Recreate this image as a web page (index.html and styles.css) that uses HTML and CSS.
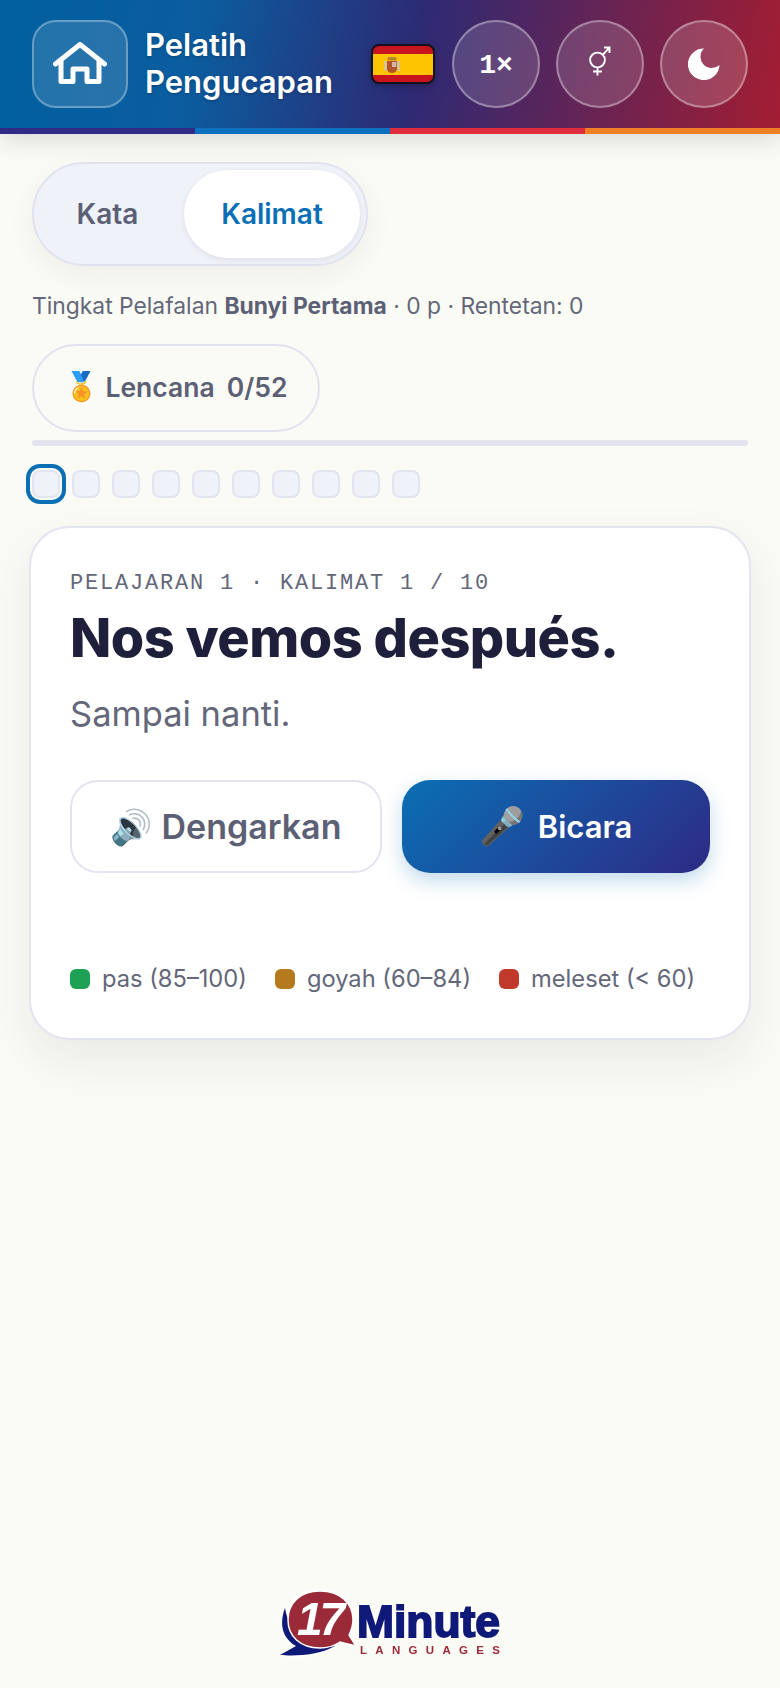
FILE: index.html
```html
<!DOCTYPE html>
<html lang="id">
<head>
<meta charset="utf-8">
<title>Pelatih Pengucapan</title>
<link rel="stylesheet" href="styles.css">
</head>
<body>
<div class="page">
  <header class="header">
    <div class="topbar">
      <button class="home" aria-label="Beranda">
        <svg viewBox="0 0 54 42" width="54" height="42" fill="none" stroke="#fff" stroke-width="5" stroke-linecap="round" stroke-linejoin="round">
          <path d="M2.5 22 L27 2.5 L51.5 22"/>
          <path d="M8 18 V39.5 H20 V27 H34 V39.5 H46 V18"/>
        </svg>
      </button>
      <h1 class="title">Pelatih<br>Pengucapan</h1>
      <svg class="flag" viewBox="0 0 64 40" width="64" height="40">
        <rect x="1" y="1" width="62" height="38" rx="7" fill="#ffc400"/>
        <path d="M1 10 V8 a7 7 0 0 1 7-7 H56 a7 7 0 0 1 7 7 V10 Z" fill="#c8141e"/>
        <path d="M1 31 V32 a7 7 0 0 0 7 7 H56 a7 7 0 0 0 7-7 V31 Z" fill="#c8141e"/>
        <rect x="13" y="17" width="2.6" height="10" fill="#d3c3a0"/>
        <rect x="26.4" y="17" width="2.6" height="10" fill="#d3c3a0"/>
        <path d="M16 17 H26 V25 a5 4 0 0 1-10 0 Z" fill="#b5532a"/>
        <rect x="21" y="18" width="4.4" height="5" fill="#cdb7b0"/>
        <rect x="16.5" y="13" width="9" height="3.6" rx="1.6" fill="#b8862a"/>
        <rect x="1" y="1" width="62" height="38" rx="7" fill="none" stroke="#14101c" stroke-width="2"/>
      </svg>
      <button class="round speed">1×</button>
      <button class="round gender">
        <svg viewBox="0 0 22 30" width="22" height="30" fill="none" stroke="#fff" stroke-width="1.9">
          <circle cx="8.5" cy="14" r="7.4"/>
          <path d="M8.5 21.5 V29.5 M4 25.5 H13 M13.7 8.8 L20.5 1.5 M15 1.5 H20.5 V7"/>
        </svg>
      </button>
      <button class="round moon">
        <svg viewBox="0 0 32 32" width="32" height="32"><path d="M16 0.5 A15.8 15.8 0 1 0 31.5 17 A11 11 0 0 1 16 0.5 Z" fill="#fff"/></svg>
      </button>
    </div>
    <div class="stripe">
      <span class="stripe-a"></span><span class="stripe-b"></span><span class="stripe-c"></span><span class="stripe-d"></span>
    </div>
  </header>

  <main class="main">
    <div class="toggle">
      <span class="tab">Kata</span>
      <span class="tab active">Kalimat</span>
    </div>
    <p class="status">Tingkat Pelafalan <b>Bunyi Pertama</b> · 0 p · Rentetan: 0</p>
    <button class="badge"><span class="emoji badge-emoji">🏅</span><span>Lencana</span><span class="count">0/52</span></button>
    <div class="progress"></div>
    <div class="dots">
      <span class="dot current"></span><span class="dot"></span><span class="dot"></span><span class="dot"></span><span class="dot"></span><span class="dot"></span><span class="dot"></span><span class="dot"></span><span class="dot"></span><span class="dot"></span>
    </div>

    <section class="card">
      <div class="kicker">PELAJARAN 1 · KALIMAT 1 / 10</div>
      <h2 class="phrase">Nos vemos después.</h2>
      <p class="translation">Sampai nanti.</p>
      <div class="actions">
        <button class="btn listen"><span class="emoji">🔊</span> Dengarkan</button>
        <button class="btn speak"><span class="emoji mic">🎤</span><span>Bicara</span></button>
      </div>
      <div class="legend">
        <span class="key"><i class="swatch green"></i>pas (85–100)</span>
        <span class="key"><i class="swatch amber"></i>goyah (60–84)</span>
        <span class="key"><i class="swatch red"></i>meleset (&lt; 60)</span>
      </div>
    </section>
  </main>

  <footer class="footer">
    <svg class="logo" viewBox="0 0 224 70" width="224" height="70">
      <path d="M7 20 C1 36 4 50 18 58 L2 67 C16 68 40 68 57 58 C36 62 12 50 7 20 Z" fill="#0f1a78"/>
      <path d="M42 3 C62 3 75 15 75 32 C75 38 73 43 71 47 L78 58 L62 54 C56 58 50 60 42 60 C22 60 10 48 10 32 C10 15 22 3 42 3 Z" fill="#9a2a38" stroke="#fff" stroke-width="1.5"/>
      <text x="19" y="47" class="logo-num">17</text>
      <text x="79" y="49" class="logo-word" textLength="143" lengthAdjust="spacingAndGlyphs">Minute</text>
      <text x="82" y="66" class="logo-sub" textLength="140">LANGUAGES</text>
    </svg>
  </footer>
</div>
</body>
</html>
```
FILE: styles.css
```css
* { box-sizing: border-box; }
html, body { margin: 0; padding: 0; }
body {
  background: #fbfbf5;
  font-family: Inter, "Noto Sans", sans-serif;
  color: #1e1f3b;
}
button { font-family: inherit; cursor: pointer; }
.page { min-height: 1688px; display: flex; flex-direction: column; }

.header { box-shadow: 0 4px 24px rgba(30, 31, 59, .18); }
.topbar {
  height: 128px;
  padding: 0 32px;
  display: flex;
  align-items: center;
  background: linear-gradient(100deg, #01609f 0%, #0b5d9f 25%, #2d2a74 53%, #a31d32 100%);
}
.home {
  width: 96px;
  height: 88px;
  flex: none;
  display: flex;
  align-items: center;
  justify-content: center;
  border-radius: 24px;
  background: rgba(255, 255, 255, .13);
  border: 2px solid rgba(255, 255, 255, .3);
  padding: 0 0 3px;
}
.title {
  margin: 0 0 2px 17px;
  flex: 1;
  font-size: 31px;
  line-height: 37px;
  font-weight: 600;
  color: #fff;
  text-shadow: 0 1px 3px rgba(0, 0, 0, .25);
}
.flag { flex: none; margin-right: 17px; filter: drop-shadow(0 2px 3px rgba(0,0,0,.25)); }
.round {
  width: 88px;
  height: 88px;
  flex: none;
  display: flex;
  align-items: center;
  justify-content: center;
  margin-left: 16px;
  padding: 0;
  border-radius: 50%;
  background: rgba(255, 255, 255, .14);
  border: 2px solid rgba(255, 255, 255, .35);
  color: #fff;
}
.speed {
  margin-left: 0;
  padding-top: 3px;
  font-family: "Liberation Mono", monospace;
  font-size: 28px;
  font-weight: 700;
}
.gender { padding-bottom: 6px; }
.moon { background: rgba(255, 255, 255, .16); }
.stripe { height: 6px; display: flex; }
.stripe span { flex: 1; }
.stripe-a { background: #2e2a85; }
.stripe-b { background: #0a6fbd; }
.stripe-c { background: #e02b3d; }
.stripe-d { background: #f07f24; }

.main { padding: 28px 32px 0; }
.toggle {
  width: 336px;
  height: 104px;
  padding: 6px;
  display: flex;
  border-radius: 52px;
  background: #f0f2f9;
  border: 2px solid #e0e2ef;
  box-shadow: 0 10px 28px rgba(30, 31, 59, .06);
}
.tab {
  display: flex;
  align-items: center;
  justify-content: center;
  font-size: 28px;
  font-weight: 600;
  color: #5c6075;
  width: 144px;
  padding-right: 9px;
}
.tab.active {
  width: 176px;
  padding-right: 0;
  border-radius: 44px;
  background: #fff;
  color: #0a6fb5;
  box-shadow: 0 2px 6px rgba(30, 31, 59, .08);
}
.status {
  margin: 24px 0 0;
  font-size: 22.85px;
  line-height: 32px;
  color: #636779;
}
.status b { font-weight: 700; color: #5c6075; }
.badge {
  display: flex;
  align-items: center;
  justify-content: center;
  gap: 6px;
  width: 288px;
  height: 88px;
  margin-top: 22px;
  padding: 0 0 3px;
  border-radius: 44px;
  background: transparent;
  border: 2px solid #e0e2ef;
  font-size: 26.5px;
  font-weight: 600;
  color: #5c6075;
}
.count { margin-left: 6px; }
.emoji { font-family: "Noto Color Emoji", Inter, sans-serif; }
.badge-emoji { font-size: 28px; }
.progress { height: 6px; margin-top: 8px; border-radius: 3px; background: #e2e3ee; }
.dots { display: flex; gap: 12px; margin-top: 24px; }
.dot {
  width: 28px;
  height: 28px;
  border-radius: 8px;
  background: #f0f2f9;
  border: 2px solid #e2e4f0;
}
.dot.current { outline: 4px solid #0a6fb5; outline-offset: 2px; }

.card {
  margin: 28px -3px 0;
  height: 514px;
  padding: 41px 39px 0;
  background: #fff;
  border: 2px solid #e2e4f0;
  border-radius: 40px;
  box-shadow: 0 20px 48px rgba(30, 31, 59, .08);
}
.kicker {
  font-family: "Liberation Mono", monospace;
  font-size: 22px;
  line-height: 30px;
  letter-spacing: 1.8px;
  color: #636779;
}
.phrase {
  margin: 6px 0 0;
  font-size: 54px;
  line-height: 66px;
  font-weight: 800;
  letter-spacing: -.5px;
  color: #1e1f3b;
}
.translation {
  margin: 21px 0 0;
  font-size: 34.5px;
  line-height: 44px;
  color: #636779;
}
.actions { display: flex; gap: 20px; margin-top: 44px; }
.btn {
  flex: 1;
  height: 93px;
  padding: 0;
  border-radius: 28px;
  font-size: 34px;
  font-weight: 600;
}
.listen { background: #fff; border: 2px solid #e2e4f0; color: #5c6075; }
.speak {
  display: flex;
  align-items: center;
  justify-content: center;
  gap: 12px;
  border: 0;
  font-size: 31px;
  color: #fff;
  background: linear-gradient(135deg, #0a6fb5, #2e2a85);
  box-shadow: 0 8px 20px rgba(10, 111, 181, .25);
}
.mic { font-size: 37px; }
.legend { display: flex; gap: 28px; margin-top: 90px; }
.key {
  display: flex;
  align-items: center;
  gap: 12px;
  font-size: 23.7px;
  line-height: 32px;
  color: #636779;
  white-space: nowrap;
}
.swatch { width: 20px; height: 20px; border-radius: 6px; flex: none; }
.green { background: #1fa155; }
.amber { background: #b57a1e; }
.red { background: #c0392b; }

.footer { margin-top: auto; padding-bottom: 30px; display: flex; justify-content: center; }
.logo { filter: drop-shadow(0 0 3px #fff); }
.logo-num { font: italic 700 46px "Liberation Sans", sans-serif; fill: #fff; letter-spacing: -3px; }
.logo-word { font: 700 44px "Liberation Sans", sans-serif; fill: #0f1a78; stroke: #0f1a78; stroke-width: 1.8; }
.logo-sub { font: 700 11.5px "Liberation Sans", sans-serif; fill: #9a2a38; }
```
